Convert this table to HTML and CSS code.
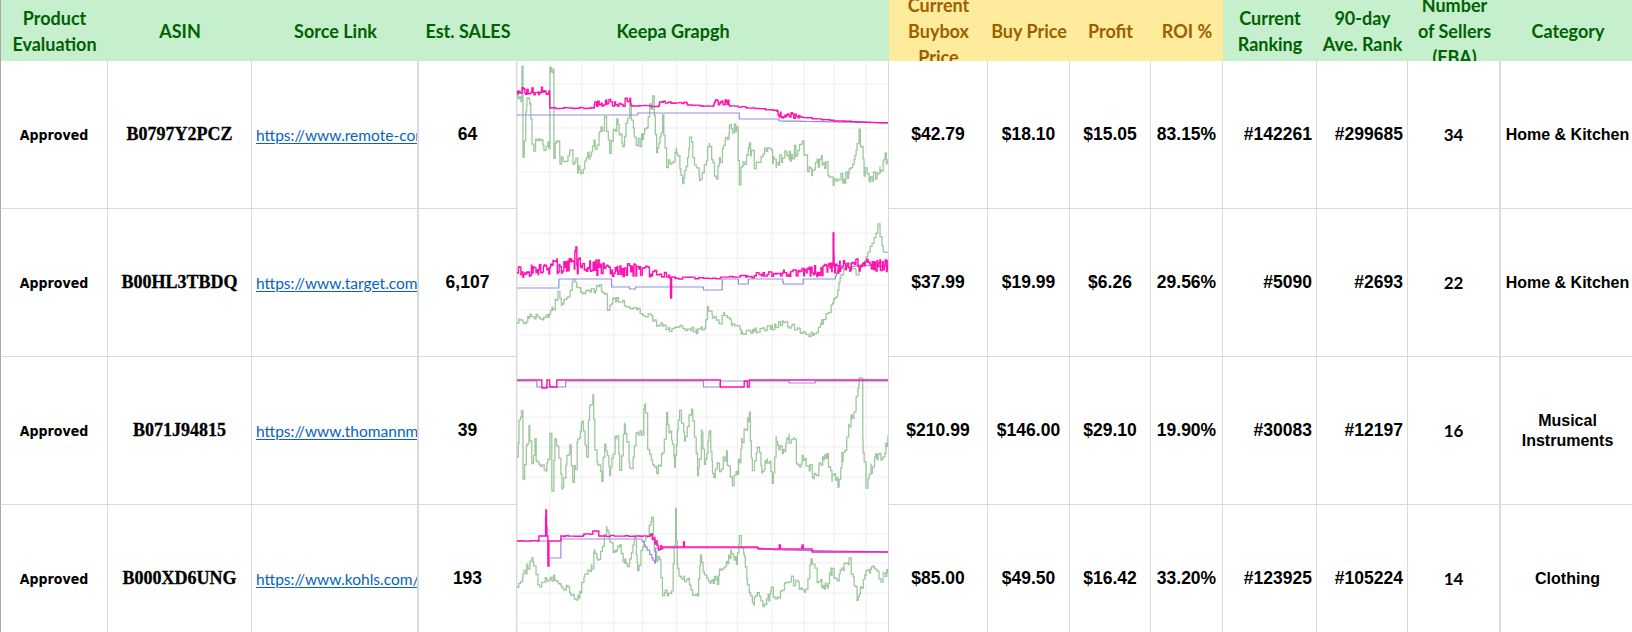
FILE: index.html
```html
<!DOCTYPE html>
<html lang="en">
<head>
<meta charset="utf-8">
<title>Product sheet</title>
<link rel="stylesheet" href="styles.css">
</head>
<body>
<div class="sheet">
  <div class="h g first">Product<br>Evaluation</div>
  <div class="h g">ASIN</div>
  <div class="h g">Sorce Link</div>
  <div class="h g">Est. SALES</div>
  <div class="h g graph-h">Keepa Grapgh</div>
  <div class="h y">Current<br>Buybox<br>Price</div>
  <div class="h y">Buy Price</div>
  <div class="h y">Profit</div>
  <div class="h y">ROI %</div>
  <div class="h g">Current<br>Ranking</div>
  <div class="h g">90-day<br>Ave. Rank</div>
  <div class="h g">Number<br>of Sellers<br>(FBA)</div>
  <div class="h g">Category</div>

  <div class="c first eval">Approved</div>
  <div class="c asin">B0797Y2PCZ</div>
  <div class="c link thick"><a href="#">https://www.remote-cor</a></div>
  <div class="c">64</div>
  <div class="c graph"><svg class="keepa" data-chart="0" viewBox="0 0 372 148" preserveAspectRatio="none"></svg></div>
  <div class="c">$42.79</div>
  <div class="c">$18.10</div>
  <div class="c">$15.05</div>
  <div class="c">83.15%</div>
  <div class="c rank">#142261</div>
  <div class="c rank">#299685</div>
  <div class="c cnt thick">34</div>
  <div class="c cat">Home &amp; Kitchen</div>

  <div class="c first eval">Approved</div>
  <div class="c asin">B00HL3TBDQ</div>
  <div class="c link thick"><a href="#">https://www.target.com</a></div>
  <div class="c">6,107</div>
  <div class="c graph"><svg class="keepa" data-chart="1" viewBox="0 0 372 148" preserveAspectRatio="none"></svg></div>
  <div class="c">$37.99</div>
  <div class="c">$19.99</div>
  <div class="c">$6.26</div>
  <div class="c">29.56%</div>
  <div class="c rank">#5090</div>
  <div class="c rank">#2693</div>
  <div class="c cnt thick">22</div>
  <div class="c cat">Home &amp; Kitchen</div>

  <div class="c first eval">Approved</div>
  <div class="c asin">B071J94815</div>
  <div class="c link thick"><a href="#">https://www.thomannm</a></div>
  <div class="c">39</div>
  <div class="c graph"><svg class="keepa" data-chart="2" viewBox="0 0 372 148" preserveAspectRatio="none"></svg></div>
  <div class="c">$210.99</div>
  <div class="c">$146.00</div>
  <div class="c">$29.10</div>
  <div class="c">19.90%</div>
  <div class="c rank">#30083</div>
  <div class="c rank">#12197</div>
  <div class="c cnt thick">16</div>
  <div class="c cat">Musical Instruments</div>

  <div class="c first eval">Approved</div>
  <div class="c asin">B000XD6UNG</div>
  <div class="c link thick"><a href="#">https://www.kohls.com/</a></div>
  <div class="c">193</div>
  <div class="c graph"><svg class="keepa" data-chart="3" viewBox="0 0 372 148" preserveAspectRatio="none"></svg></div>
  <div class="c">$85.00</div>
  <div class="c">$49.50</div>
  <div class="c">$16.42</div>
  <div class="c">33.20%</div>
  <div class="c rank">#123925</div>
  <div class="c rank">#105224</div>
  <div class="c cnt thick">14</div>
  <div class="c cat">Clothing</div>
</div>
<script src="charts.js"></script>
</body>
</html>
```

FILE: styles.css
```css
* { box-sizing: border-box; }
html, body {
  margin: 0;
  padding: 0;
  background: #fff;
  width: 1632px;
  height: 632px;
  overflow: hidden;
}
.sheet {
  display: grid;
  grid-template-columns: 108px 144px 167px 98px 372px 99px 82px 81px 72px 94px 91px 93px 134px;
  grid-template-rows: 61px repeat(4, 148px);
  width: 1635px;
}
.h {
  display: flex;
  align-items: center;
  justify-content: center;
  text-align: center;
  overflow: hidden;
  font-family: Lato, "Open Sans", sans-serif;
  font-weight: 700;
  font-size: 18px;
  line-height: 26px;
  padding: 0 2px;
}
.h.g { background: #c6efce; color: #006100; }
.h.y { background: #ffeb9c; color: #9c5f00; }
.h.graph-h { padding-right: 62px; }
.first { border-left: 1px solid #a8a8a8; }
.c {
  display: flex;
  align-items: center;
  justify-content: center;
  overflow: hidden;
  white-space: nowrap;
  border-right: 1px solid #d9d9d9;
  border-bottom: 1px solid #d9d9d9;
  font-family: "Liberation Sans", Arial, sans-serif;
  font-weight: 700;
  font-size: 17.5px;
  color: #000;
}
.c.thick { border-right: 2px solid #dadada; }
.c.eval {
  font-family: "DejaVu Sans Condensed", "DejaVu Sans", sans-serif;
  font-size: 14px;
}
.c.asin {
  font-family: "Liberation Serif", "Times New Roman", serif;
  font-size: 18px;
  -webkit-text-stroke: 0.3px #000;
}
.c.link {
  justify-content: flex-start;
  padding-left: 4px;
  font-family: Lato, "Open Sans", sans-serif;
  font-weight: 400;
  font-size: 15.5px;
}
.c.link a {
  display: block;
  min-width: 0;
  overflow: hidden;
  color: #0563c1;
  text-decoration: underline;
  text-underline-offset: 2px;
}
.c.rank { justify-content: flex-end; padding-right: 4px; }
.c.cnt {
  font-family: Lato, "Open Sans", sans-serif;
  font-size: 17px;
}
.c.cat {
  white-space: normal;
  text-align: center;
  font-size: 16px;
  line-height: 20px;
  padding: 0 2px;
}
.c.graph {
  display: block;
  border-bottom: none;
  padding: 0;
}
.keepa {
  display: block;
  width: 100%;
  height: 100%;
}
```

FILE: charts.js
```js
(function () {
  var NS = 'http://www.w3.org/2000/svg';
  function rng(seed) {
    return function () {
      seed |= 0; seed = seed + 0x6D2B79F5 | 0;
      var t = Math.imul(seed ^ seed >>> 15, 1 | seed);
      t = t + Math.imul(t ^ t >>> 7, 61 | t) ^ t;
      return ((t ^ t >>> 14) >>> 0) / 4294967296;
    };
  }
  function parse(s) {
    return s.trim().split(/\s+/).map(function (tok) {
      return tok.split(',').map(Number);
    });
  }
  function build(str, amp, step, seed) {
    var pts = parse(str), r = rng(seed);
    var d = 'M0,' + pts[0][1].toFixed(1);
    for (var i = 0; i < pts.length - 1; i++) {
      var a = pts[i], b = pts[i + 1];
      var am = a.length > 2 ? a[2] : amp;
      var st = a.length > 3 ? a[3] : step;
      var x = a[0];
      while (x < b[0] - 0.01) {
        var nx = Math.min(x + st * (0.5 + r()), b[0]);
        var t = (nx - a[0]) / (b[0] - a[0]);
        var y = a[1] + (b[1] - a[1]) * t + (r() * 2 - 1) * am;
        y = Math.max(1, Math.min(147, y));
        d += 'H' + nx.toFixed(1) + 'V' + y.toFixed(1);
        x = nx;
      }
    }
    return d;
  }
  var charts = [
    {
      hy: [23, 67, 111],
      green: ['0,34 4,34 5,11 6,92 10,41 13,41 15,84 31,86 32,86 33,7 36,7 37,92 40,79 43,101 53,91 63,109 73,94 83,74 88,51 93,87 100,61 106,87 113,44 120,84 126,77 136,37 140,94 146,61 150,107 160,91 166,127 173,81 183,114 193,87 200,117 206,87 213,71 220,66 223,117 233,87 240,107 250,91 260,101 273,94 286,84 293,111 306,101 320,124 333,111 340,94 343,74 348,112 356,118 364,108 368,98 372,100', 7, 1.5],
      blue: '0,54,0,6 120,54,0,1 121,52,0,6 222,52,0,1 223,58,0,6 262,58,0,1 263,60,0,6 320,61,0,6 372,62',
      pink: '0,30,4,1 32,30,0,1 33,47,0.6,3 77,47,0,1 78,41,5,1.5 114,42,0,1 115,45,0.6,3 142,45,0,1 143,41,1,2 170,42,0,1 171,44,0.6,3 197,45,0,1 198,41,3,1 212,42,0,1 213,45,0.6,3 255,49,0.6,3 261,50,0,1 262,54,3,1 283,55,0,1 284,56,0.5,4 320,60,0.3,6 372,62'
    },
    {
      hy: [24, 49, 76, 101, 126],
      green: ['0,114 3,109 6,114 13,106 23,109 31,106 36,99 41,84 45,96 51,86 56,71 60,76 66,83 73,83 83,78 88,86 91,103 96,89 106,94 116,99 130,106 140,114 153,121 166,118 180,123 188,119 191,99 196,109 203,114 208,104 216,116 226,123 240,121 256,118 266,113 276,118 290,126 298,124 306,113 315,96 320,86 326,63 333,56 340,63 350,50 358,30 362,17 366,40 372,45', 3, 2],
      blue: '0,79,0,5 41,79,0,1 42,70,0,5 94,70,0,1 95,78,0,5 112,78,0,1 113,80,0,1 118,80,0,1 119,78,0,5 186,78,0,1 187,81,0,5 205,81,0,1 206,70,0,5 221,70,0,1 222,75,0,5 231,75,0,1 232,70,0,5 266,70,0,1 267,75,0,5 286,75,0,1 287,70,0,5 318,70,0,1 322,60,0,2 345,56,0,3 372,58',
      pink: '0,64,6,1 30,60,8,1 55,55,10,1 58,50,0,1 59,38,0,1 60,56,9,1 75,58,9,1 90,60,7,1 120,62,6,1.5 140,64,4,2 150,67,2,3 153,68,0,1 154,89,0,1 155,68,1,3 160,69,1,4 200,69,1,4 230,67,3,2 260,65,4,1.5 290,63,6,1 316,60,0,1 317,24,0,1 318,58,7,1 345,55,6,1 372,57'
    },
    {
      hy: [30, 60, 90, 120],
      green: ['0,100 2,66 5,51 6,120 10,83 12,68 15,110 18,86 20,108 31,108 33,78 35,130 38,83 41,93 45,130 50,103 53,86 56,128 61,83 65,70 70,96 73,46 76,36 78,90 81,103 85,120 88,83 93,116 100,73 103,110 108,68 113,116 120,73 125,83 128,43 131,90 136,103 140,120 146,93 150,60 155,83 158,110 163,50 168,83 175,50 178,83 181,116 185,76 188,113 193,70 196,116 203,110 210,100 216,126 221,113 226,83 233,61 236,116 241,86 246,116 251,100 256,123 260,83 266,93 273,83 278,78 281,110 286,100 293,110 298,120 303,108 311,100 316,120 323,126 326,100 333,70 338,50 343,26 345,22 347,95 350,128 355,112 362,95 366,100 372,82', 6, 1.5],
      blue: '0,24,0,6 19,24,0,1 20,30,0,6 48,30,0,1 49,24,0,6 186,24,0,1 187,30,0,6 203,30,0,1 204,24,0,6 272,24,0,1 273,26,0,5 298,26,0,1 299,24,0,6 372,24',
      pink: '0,23,0,5 24,23,0,1 25,31,0,1 29,31,0,1 30,23,0,1 32,23,0,1 33,30,0,1 39,30,0,1 40,23,0,6 203,23,0,1 204,30,0,6 227,30,0,1 228,24,0,1 230,24,0,1 231,30,0,1 232,30,0,1 233,23,0,6 372,23'
    },
    {
      hy: [29, 58, 88, 118],
      green: ['0,82 6,73 10,63 15,56 18,66 21,78 31,76 35,73 40,76 45,78 51,84 58,91 61,94 63,86 68,73 71,66 75,59 78,46 81,53 86,39 90,23 93,39 98,48 103,43 108,59 113,56 118,29 121,63 126,39 131,33 135,11 138,46 143,59 146,86 155,86 159,8 161,66 168,73 173,79 178,93 181,86 184,53 188,74 201,76 203,61 210,59 215,49 220,56 223,31 228,53 231,76 236,99 241,89 248,104 255,84 260,96 266,86 273,73 280,79 288,86 295,54 301,76 310,83 315,66 321,76 328,61 333,56 338,76 341,96 350,70 358,60 365,75 372,65', 5, 1.5],
      blue: '0,36,0,5 30,36,0,1 31,53,0,4 43,53,0,1 44,34,0,6 124,34,0,2 138,58,0,1 139,43,0,6 240,43,0,3 260,45,0,6 372,47',
      pink: '0,36,0.4,4 21,36,0,1 22,31,0,3 28,31,0,1 29,5,0,1 30,31,0,1 31,61,0,1 32,36,0,3 43,36,0,1 44,31,0.5,3 66,31,0,1 67,29,0.5,3 75,29,0,1 76,26,0,3 81,26,0,1 82,31,0.6,3 133,31,5,1 145,46,0,1 146,42,0,4 166,42,0,1 167,37,0,1 168,42,0,5 240,42,0,1 242,44,0,4 262,44,0,1 263,40,0,1 264,44,0,4 285,44,0,1 286,40,0,1 287,44,0,4 295,44,0,1 296,47,0,6 372,47'
    }
  ];
  var vx = [0.5, 33, 65, 97, 126, 160, 190, 221, 256, 288, 318, 350];
  function el(name, attrs) {
    var e = document.createElementNS(NS, name);
    for (var k in attrs) e.setAttribute(k, attrs[k]);
    return e;
  }
  document.querySelectorAll('svg.keepa').forEach(function (svg) {
    var i = +svg.getAttribute('data-chart');
    var c = charts[i];
    var g = el('g', { stroke: '#efefef', 'stroke-width': '1' });
    vx.forEach(function (x) { g.appendChild(el('line', { x1: x, y1: 0, x2: x, y2: 148 })); });
    c.hy.forEach(function (y) { g.appendChild(el('line', { x1: 0, y1: y, x2: 372, y2: y })); });
    svg.appendChild(g);
    svg.appendChild(el('path', {
      d: build(c.green[0], c.green[1], c.green[2], 101 + i * 7),
      fill: 'none', stroke: '#4f9a4f', 'stroke-opacity': '0.55', 'stroke-width': '1.3'
    }));
    svg.appendChild(el('path', {
      d: build(c.blue, 0, 5, 203 + i),
      fill: 'none', stroke: '#8f8fe2', 'stroke-width': '1.2'
    }));
    svg.appendChild(el('path', {
      d: build(c.pink, 0, 3, 307 + i * 3),
      fill: 'none', stroke: '#ff12b0', 'stroke-width': '1.4'
    }));
  });
})();
```
